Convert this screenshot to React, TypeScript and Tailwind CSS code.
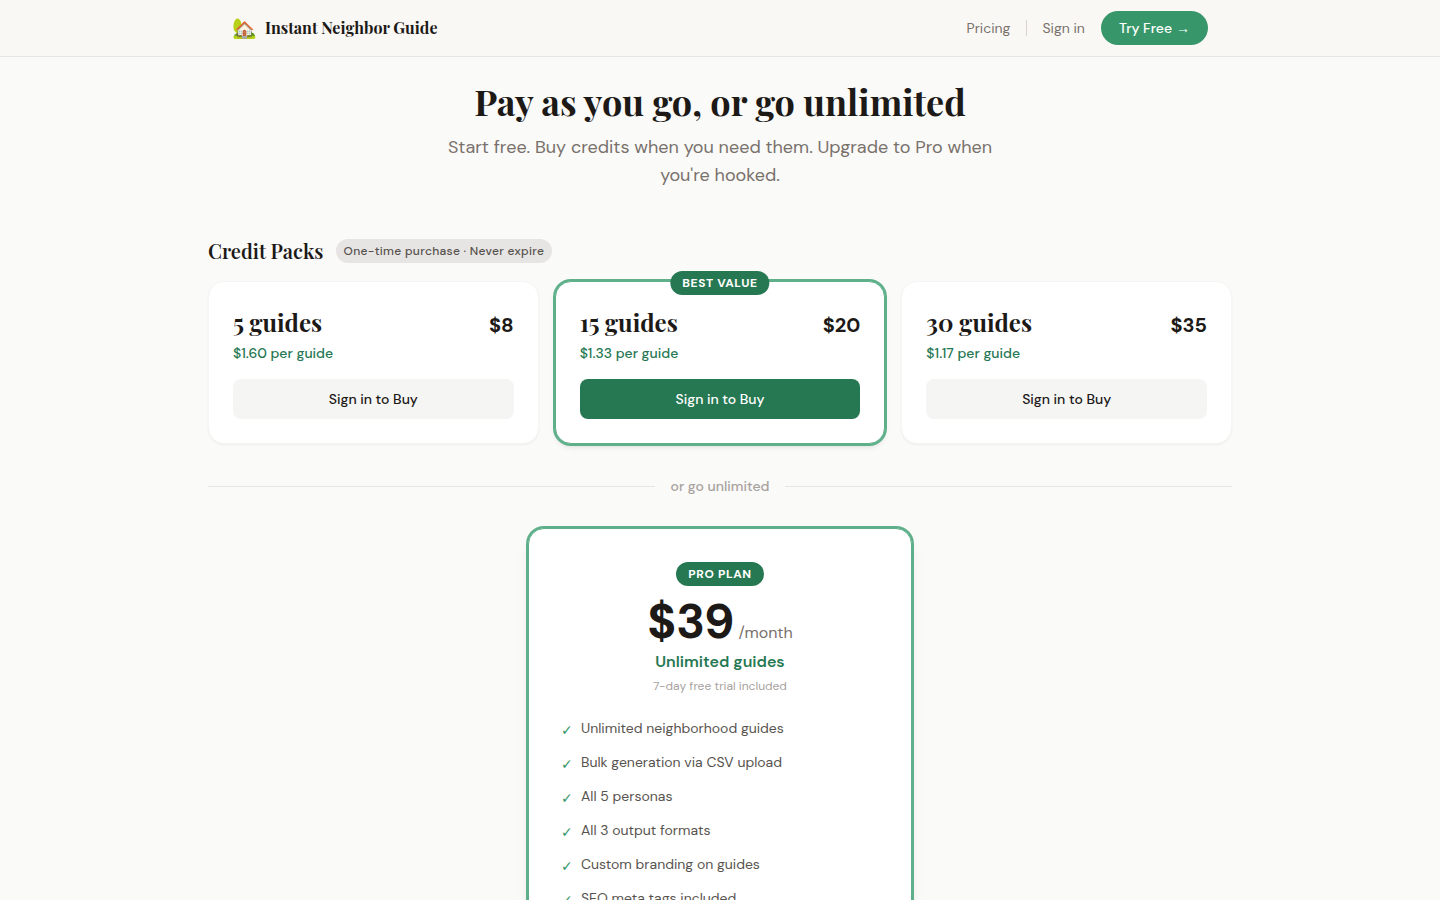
const serif = "font-['Playfair_Display','Liberation_Serif',serif]";

const packs = [
  { guides: 5, price: "$8", rate: "$1.60", featured: false },
  { guides: 15, price: "$20", rate: "$1.33", featured: true },
  { guides: 30, price: "$35", rate: "$1.17", featured: false },
];

const features = [
  "Unlimited neighborhood guides",
  "Bulk generation via CSV upload",
  "All 5 personas",
  "All 3 output formats",
  "Custom branding on guides",
  "SEO meta tags included",
];

function Header() {
  return (
    <header className="sticky top-0 z-20 border-b border-[#e7e5e4] bg-[#faf8f5]">
      <div className="mx-auto flex h-14 max-w-5xl items-center justify-between px-6">
        <a href="#" className="flex items-center gap-2">
          <span className="font-['Noto_Color_Emoji',sans-serif] text-xl leading-7" aria-hidden="true">
            🏡
          </span>
          <span className={`${serif} text-base font-bold text-[#1c1917]`}>
            Instant Neighbor Guide
          </span>
        </a>
        <nav className="flex items-center gap-4 text-sm text-[#78716c]">
          <a href="#pricing">Pricing</a>
          <span className="-mr-px h-4 w-px bg-[#d6d3d1]" />
          <a href="#signin">Sign in</a>
          <a
            href="#try"
            className="flex h-[34px] items-center gap-1 rounded-full bg-[#38976a] px-[18px] font-medium text-white"
          >
            Try Free <span className="font-['Liberation_Sans',sans-serif]">→</span>
          </a>
        </nav>
      </div>
    </header>
  );
}

function PackCard({ guides, price, rate, featured }: (typeof packs)[number]) {
  return (
    <article
      className={
        featured
          ? "relative rounded-2xl border border-[#5fb08a] bg-white p-6 shadow-md ring-2 ring-[#5fb08a]"
          : "relative rounded-2xl border border-[#f5f5f4] bg-white p-6 shadow-xs"
      }
    >
      {featured && (
        <span className="absolute -top-[11px] left-1/2 flex h-6 -translate-x-1/2 items-center rounded-full bg-[#267853] px-3 text-xs font-bold tracking-wider whitespace-nowrap text-white uppercase">
          Best value
        </span>
      )}
      <div className="flex h-[33px] items-baseline justify-between text-[#1c1917]">
        <h3 className={`${serif} text-2xl leading-8 font-bold`}>{guides} guides</h3>
        <span className="text-xl leading-7 font-bold">{price}</span>
      </div>
      <p className="mt-1 text-sm font-medium text-[#267853]">{rate} per guide</p>
      <button
        type="button"
        className={
          featured
            ? "mt-4 h-10 w-full rounded-lg bg-[#267853] text-sm font-medium text-white"
            : "mt-4 h-10 w-full rounded-lg bg-[#f5f5f4] text-sm font-medium text-[#1c1917]"
        }
      >
        Sign in to Buy
      </button>
    </article>
  );
}

function ProCard() {
  return (
    <section className="mx-auto max-w-sm rounded-2xl border border-[#5fb08a] bg-white p-8 shadow-lg ring-2 ring-[#5fb08a]">
      <div className="flex flex-col items-center pt-px">
        <span className="flex h-6 items-center rounded-full bg-[#267853] px-3 text-xs font-bold tracking-wider text-white uppercase">
          Pro plan
        </span>
        <p className="mt-3 flex items-baseline gap-1">
          <span className="text-5xl leading-12 font-bold text-[#1c1917]">$39</span>
          <span className="text-base text-[#78716c]">/month</span>
        </p>
        <p className="mt-1 font-semibold text-[#267853]">Unlimited guides</p>
        <p className="mt-1 text-xs text-[#a8a29e]">7-day free trial included</p>
      </div>
      <ul className="mt-6 flex flex-col gap-2.5">
        {features.map((feature) => (
          <li key={feature} className="flex items-start gap-2 text-sm leading-5 text-[#57534e]">
            <span className="w-3 font-['DejaVu_Sans',sans-serif] leading-6 text-[#38976a]">✓</span>
            {feature}
          </li>
        ))}
      </ul>
    </section>
  );
}

export default function App() {
  return (
    <div className="min-h-screen bg-[#fafaf8] font-['DM_Sans',Inter,sans-serif] text-[#1c1917]">
      <Header />
      <main className="mx-auto max-w-5xl pt-6 pb-16">
        <div className="mx-auto max-w-xl text-center">
          <h1 className={`${serif} text-4xl leading-10 font-bold`}>
            Pay as you go, or go unlimited
          </h1>
          <p className="mt-3 text-lg leading-7 text-[#78716c]">
            Start free. Buy credits when you need them. Upgrade to Pro when you're hooked.
          </p>
        </div>

        <section id="pricing" className="mt-12">
          <div className="flex items-center gap-3">
            <h2 className={`${serif} text-xl leading-7 font-semibold`}>Credit Packs</h2>
            <span className="flex h-6 items-center rounded-full bg-[#e7e5e4] px-2 text-xs font-medium tracking-wide text-[#57534e]">
              One-time purchase · Never expire
            </span>
          </div>
          <div className="mt-4 grid grid-cols-3 gap-4">
            {packs.map((pack) => (
              <PackCard key={pack.guides} {...pack} />
            ))}
          </div>
        </section>

        <div className="my-8 flex items-center gap-4">
          <span className="h-px flex-1 bg-[#e7e5e4]" />
          <span className="text-sm font-medium text-[#a8a29e]">or go unlimited</span>
          <span className="h-px flex-1 bg-[#e7e5e4]" />
        </div>

        <ProCard />
      </main>
    </div>
  );
}
